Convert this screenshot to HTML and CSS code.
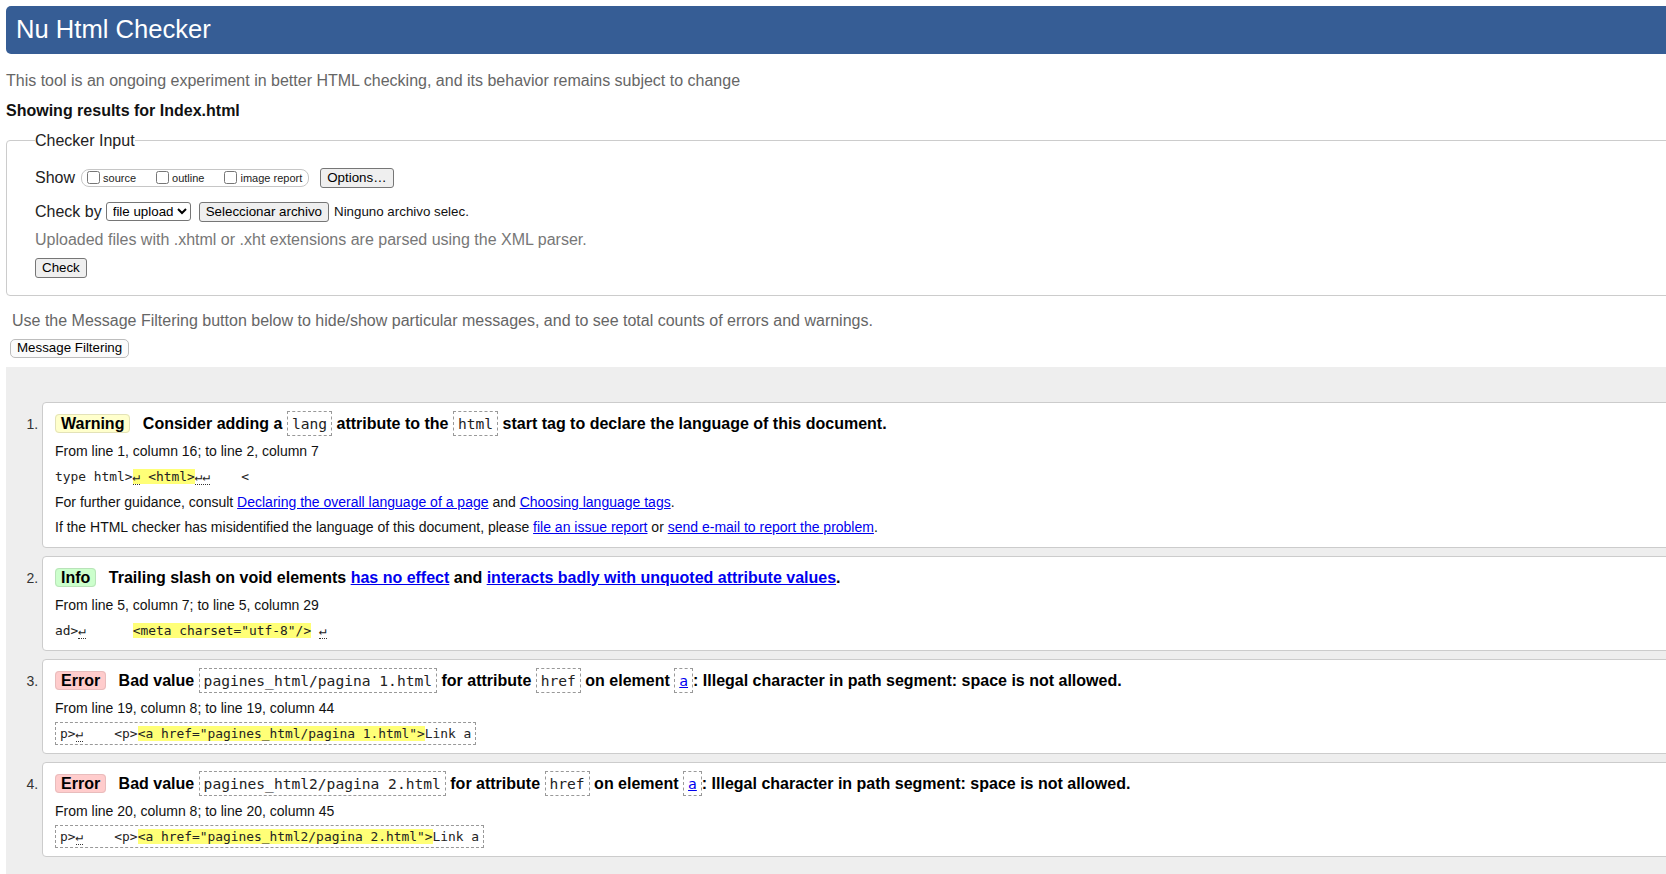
FILE: index.html
```html
<!DOCTYPE html>
<html>
<head>
<meta charset="utf-8">
<title>Nu Html Checker</title>
<link rel="stylesheet" href="styles.css">
</head>
<body>
<div class="page">
  <h1 class="title">Nu Html Checker</h1>
  <p class="intro">This tool is an ongoing experiment in better HTML checking, and its behavior remains subject to change</p>
  <p class="showing">Showing results for Index.html</p>
  <fieldset class="input">
    <legend>Checker Input</legend>
    <div class="row row-show">
      <span class="lbl">Show</span>
      <fieldset class="opts">
        <label><input type="checkbox">source</label>
        <label><input type="checkbox">outline</label>
        <label class="last"><input type="checkbox">image report</label>
      </fieldset>
      <button class="btn btn-options">Options…</button>
    </div>
    <div class="row row-by">
      <span class="lbl">Check by</span>
      <select class="sel"><option>file upload</option></select>
      <button class="btn btn-file">Seleccionar archivo</button>
      <span class="nofile">Ninguno archivo selec.</span>
    </div>
    <p class="hint">Uploaded files with .xhtml or .xht extensions are parsed using the XML parser.</p>
    <div class="row row-check"><button class="btn">Check</button></div>
  </fieldset>
  <p class="filter-note">Use the Message Filtering button below to hide/show particular messages, and to see total counts of errors and warnings.</p>
  <button class="filter-btn">Message Filtering</button>
  <ol class="messages">
    <li class="msg warning">
      <p class="msg-title"><strong class="badge">Warning</strong> <span>Consider adding a <code>lang</code> attribute to the <code>html</code> start tag to declare the language of this document.</span></p>
      <p class="loc">From line 1, column 16; to line 2, column 7</p>
      <p class="extract"><code>type html&gt;<mark><span class="lf">↵</span> &lt;html&gt;</mark><span class="lf">↵↵</span>    &lt;</code></p>
      <p>For further guidance, consult <a href="#">Declaring the overall language of a page</a> and <a href="#">Choosing language tags</a>.</p>
      <p>If the HTML checker has misidentified the language of this document, please <a href="#">file an issue report</a> or <a href="#">send e-mail to report the problem</a>.</p>
    </li>
    <li class="msg info">
      <p class="msg-title"><strong class="badge">Info</strong> <span>Trailing slash on void elements <a href="#">has no effect</a> and <a href="#">interacts badly with unquoted attribute values</a>.</span></p>
      <p class="loc">From line 5, column 7; to line 5, column 29</p>
      <p class="extract"><code>ad&gt;<span class="lf">↵</span>      <mark>&lt;meta charset="utf-8"/&gt;</mark> <span class="lf">↵</span></code></p>
    </li>
    <li class="msg error">
      <p class="msg-title"><strong class="badge">Error</strong> <span>Bad value <code>pagines_html/pagina 1.html</code> for attribute <code>href</code> on element <code><a href="#">a</a></code>: Illegal character in path segment: space is not allowed.</span></p>
      <p class="loc">From line 19, column 8; to line 19, column 44</p>
      <p class="extract"><code class="boxed">p&gt;<span class="lf">↵</span>    &lt;p&gt;<mark>&lt;a href="pagines_html/pagina 1.html"&gt;</mark>Link a</code></p>
    </li>
    <li class="msg error">
      <p class="msg-title"><strong class="badge">Error</strong> <span>Bad value <code>pagines_html2/pagina 2.html</code> for attribute <code>href</code> on element <code><a href="#">a</a></code>: Illegal character in path segment: space is not allowed.</span></p>
      <p class="loc">From line 20, column 8; to line 20, column 45</p>
      <p class="extract"><code class="boxed">p&gt;<span class="lf">↵</span>    &lt;p&gt;<mark>&lt;a href="pagines_html2/pagina 2.html"&gt;</mark>Link a</code></p>
    </li>
  </ol>
</div>
</body>
</html>
```

FILE: styles.css
```css
html, body {
  margin: 0;
  padding: 0;
  overflow: hidden;
  background: #fff;
}

body {
  font-family: "Liberation Sans", Arial, sans-serif;
  font-size: 16px;
  color: #111;
}

.page {
  width: 1700px;
}

.title {
  margin: 6px 6px 0;
  padding: 9px 10px 9.5px;
  background: #365d95;
  color: #fff;
  border-radius: 5px;
  font-size: 25.6px;
  font-weight: normal;
  line-height: 29px;
}

.intro {
  margin: 18px 6px 0;
  line-height: 18px;
  color: #666;
}

.showing {
  margin: 12px 6px 0;
  line-height: 18px;
  font-weight: bold;
  color: #111;
}

.input {
  margin: 12px 6px 0 6px;
  padding: 0 28px 17px 28px;
  border: 1px solid #ccc;
  border-radius: 4px;
  min-width: 0;
}

.input legend {
  padding: 0;
  font-size: 16px;
  color: #222;
}

.row {
  display: flex;
  align-items: center;
  height: 20px;
}

.row-show {
  margin-top: 18px;
}

.row-by {
  margin-top: 14px;
}

.row-check {
  margin-top: 9px;
}

.lbl {
  font-size: 16px;
  color: #222;
}

.opts {
  display: flex;
  align-items: center;
  box-sizing: border-box;
  height: 18px;
  margin: 0 0 0 6px;
  padding: 0 1px;
  border: 1px solid #c6c6c6;
  border-radius: 8px;
  min-width: 0;
}

.opts label {
  display: flex;
  align-items: flex-end;
  font-size: 11px;
  line-height: 12px;
  color: #222;
  margin-right: 16px;
}

.opts label.last {
  margin-right: 5px;
}

.opts input {
  width: 13px;
  height: 13px;
  margin: 0 3px 0 4px;
}

.btn {
  box-sizing: border-box;
  height: 20px;
  padding: 1px 6px;
  border: 1px solid #767676;
  border-radius: 3px;
  background: #efefef;
  color: #000;
  font-family: "Liberation Sans", Arial, sans-serif;
  font-size: 13.333px;
  line-height: 16px;
}

.btn-options {
  margin-left: 11px;
}

.sel {
  box-sizing: border-box;
  height: 19px;
  margin-left: 4px;
  padding: 0 0 0 2px;
  border: 1px solid #767676;
  border-radius: 3px;
  background: #fff;
  color: #000;
  font-family: "Liberation Sans", Arial, sans-serif;
  font-size: 13.333px;
}

.btn-file {
  margin-left: 8px;
}

.nofile {
  margin-left: 5px;
  font-size: 13.333px;
  color: #111;
}

.hint {
  margin: 9px 0 0;
  line-height: 18px;
  color: #777;
}

.filter-note {
  margin: 16px 6px 0 12px;
  line-height: 18px;
  color: #666;
}

.filter-btn {
  display: block;
  box-sizing: border-box;
  height: 19px;
  margin: 9px 0 0 10px;
  padding: 0 6px;
  border: 1px solid #bdbdbd;
  border-radius: 5px;
  background: #fbfbfb;
  color: #000;
  font-family: "Liberation Sans", Arial, sans-serif;
  font-size: 13.333px;
  line-height: 16px;
}

.messages {
  margin: 9px 6px 0 6px;
  padding: 35px 0 40px 36px;
  background: #eee;
  list-style: decimal outside;
}

.msg {
  margin: 0 0 8px;
  padding: 0 12px 3px;
  border: 1px solid #ccc;
  border-radius: 4px;
  background: #fff;
  font-size: 14px;
  color: #111;
}

.msg::marker {
  color: #333;
}

.msg p {
  margin: 7px 0;
  line-height: 18.5px;
}

.msg p.msg-title {
  margin: 10px 0 7px;
  font-size: 16px;
  line-height: 22px;
  font-weight: bold;
  color: #000;
}

.badge {
  padding: 0 5px;
  margin-right: 8px;
  border: 1px solid #ddd;
  border-radius: 4px;
}

.warning .badge {
  background: #ffffcc;
  border-color: #e3e2b8;
}

.info .badge {
  background: #ccffcc;
  border-color: #b9e3b9;
}

.error .badge {
  background: #ffcccc;
  border-color: #e8bcbc;
}

.msg-title code {
  font-family: "DejaVu Sans Mono", "Liberation Mono", monospace;
  font-size: 14.6px;
  font-weight: normal;
  line-height: 1;
  padding: 3px 4px;
  border: 1px dashed #999;
  color: #222;
}

a {
  color: #0000ee;
  text-decoration: underline;
}

.extract code {
  font-family: "DejaVu Sans Mono", "Liberation Mono", monospace;
  font-size: 12.9px;
  line-height: 1;
  white-space: pre;
  color: #222;
}

.extract code.boxed {
  padding: 3px 4px;
  border: 1px dashed #999;
}

mark {
  background: #ffff77;
  color: #222;
}

.lf {
  border-bottom: 1px dotted #333;
}
```
